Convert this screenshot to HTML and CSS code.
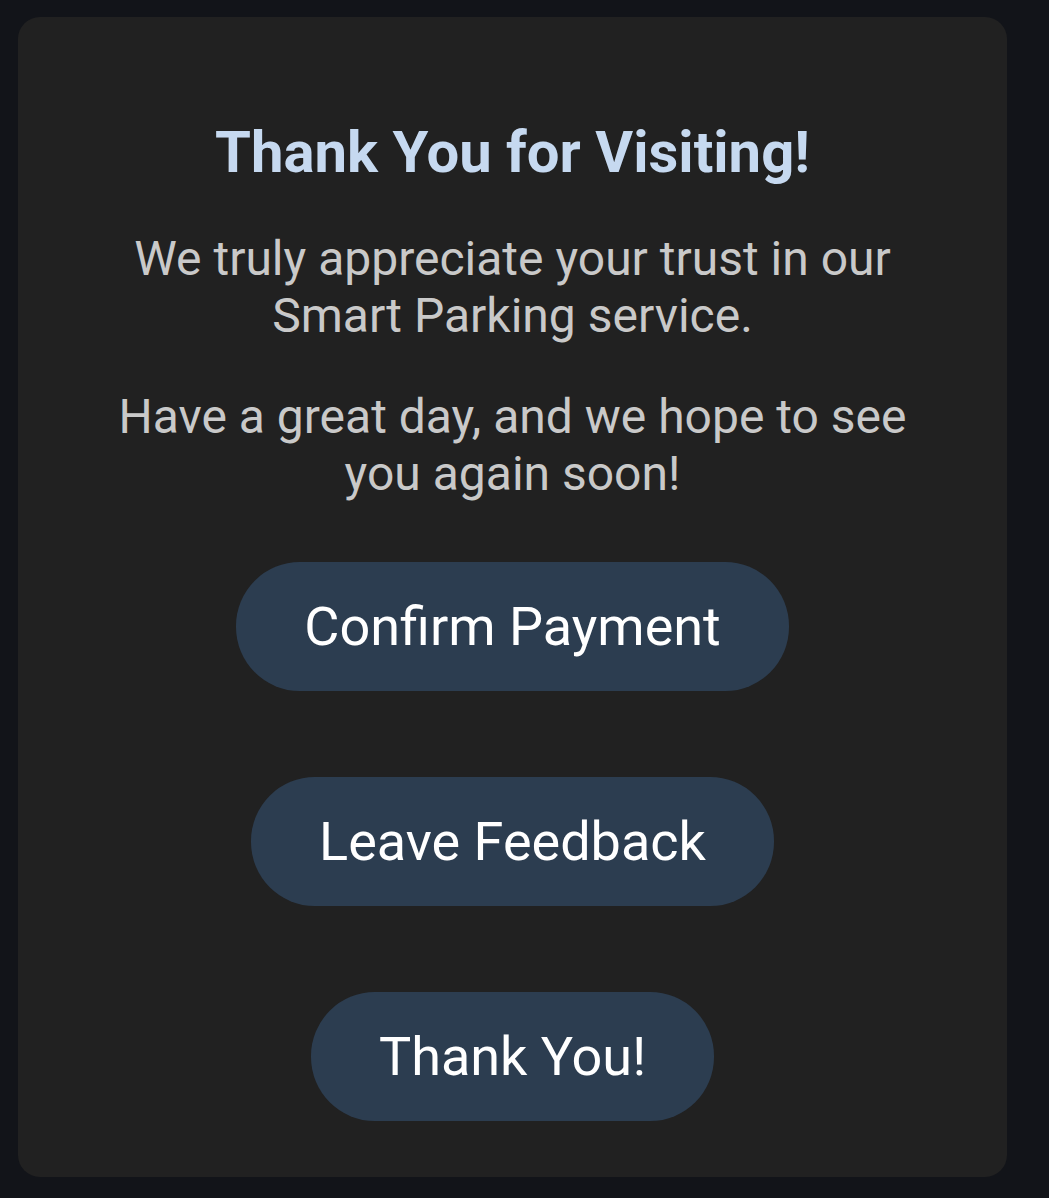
FILE: index.html
```html
<!DOCTYPE html>
<html lang="en">
<head>
<meta charset="utf-8">
<title>Thank You</title>
<link rel="stylesheet" href="styles.css">
</head>
<body>
<main class="card">
  <h1 class="title">Thank You for Visiting!</h1>
  <p class="message">We truly appreciate your trust in our Smart Parking service.</p>
  <p class="message">Have a great day, and we hope to see you again soon!</p>
  <div class="actions">
    <button class="pill">Confirm Payment</button>
    <button class="pill">Leave Feedback</button>
    <button class="pill">Thank You!</button>
  </div>
</main>
</body>
</html>
```
FILE: styles.css
```css
html, body {
  margin: 0;
  padding: 0;
  background: #121419;
}
body {
  padding: 17px 42px 21px 18px;
  font-family: Roboto, "Liberation Sans", sans-serif;
}
.card {
  background: #212121;
  border-radius: 22px;
  height: 1160px;
  box-sizing: border-box;
  padding: 100px 96px 0;
  display: flex;
  flex-direction: column;
  align-items: center;
  text-align: center;
}
.title {
  margin: 0;
  font-size: 58px;
  font-weight: 700;
  color: #c6d9f0;
  line-height: 70px;
}
.message {
  margin: 0;
  font-size: 48px;
  line-height: 57px;
  color: #c9c9c9;
}
.title + .message { margin-top: 43px; }
.message + .message { margin-top: 44px; }
.actions {
  margin-top: 60px;
  display: flex;
  flex-direction: column;
  align-items: center;
  gap: 86px;
}
.pill {
  background: #2c3d50;
  color: #ffffff;
  border: none;
  border-radius: 64px;
  height: 129px;
  padding: 0 68px;
  font-family: Roboto, "Liberation Sans", sans-serif;
  font-size: 54px;
  font-weight: 400;
}
```
